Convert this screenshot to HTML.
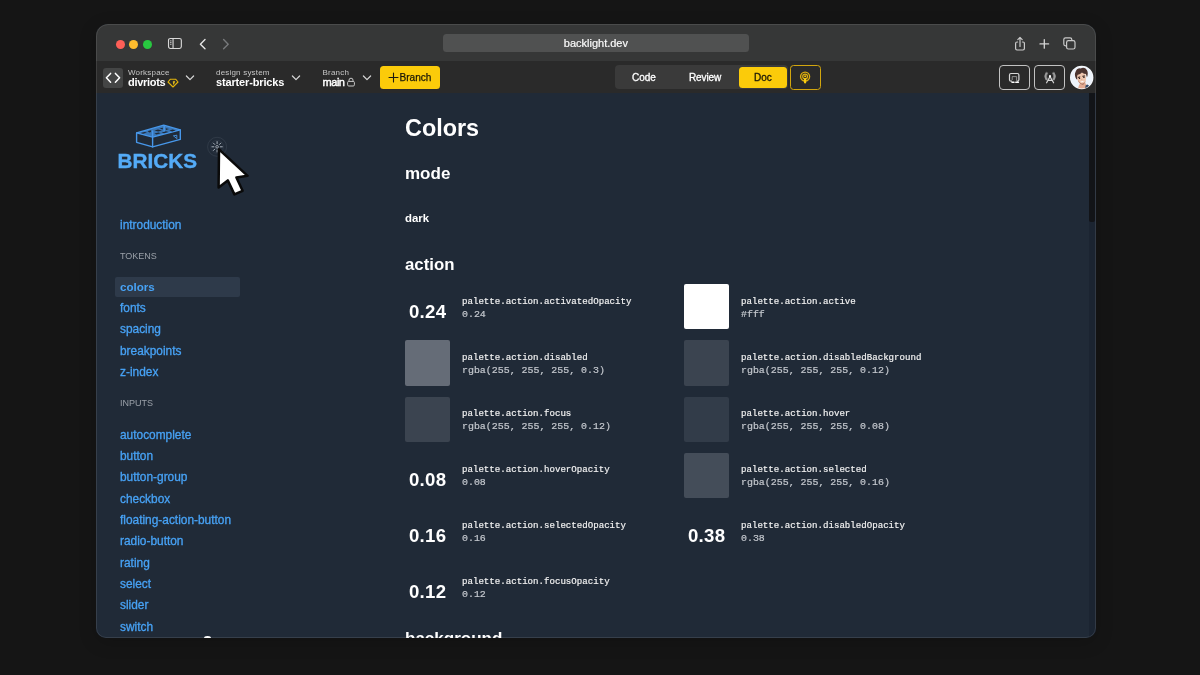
<!DOCTYPE html>
<html lang="en">
<head>
<meta charset="utf-8">
<title>backlight.dev – Colors</title>
<style>
*{box-sizing:border-box;margin:0;padding:0}
html,body{width:1200px;height:675px;overflow:hidden;background:#151515;font-family:"Liberation Sans",Arial,sans-serif;color:#fff}
.abs{position:absolute}
#win{will-change:transform;position:absolute;left:96px;top:24px;width:1000px;height:613.6px;border-radius:12px 12px 10px 10px;overflow:hidden;background:#202a37;box-shadow:0 4px 18px rgba(0,0,0,.18)}
#rim{position:absolute;left:0;top:0;width:100%;height:100%;border-radius:12px 12px 10px 10px;border:1px solid rgba(255,255,255,.1);pointer-events:none}
#titlebar{position:absolute;left:0;top:0;width:100%;height:37px;background:#363737;border-left:1px solid #363737}
#toolbar{position:absolute;left:0;top:37px;width:100%;height:31.6px;background:#2a2a2a;border-left:1px solid #2a2a2a}
#content{position:absolute;left:0;top:68.6px;width:100%;height:545px;background:#202a37;border-left:1px solid #202a37}
.dot{position:absolute;top:15.9px;width:9px;height:9px;border-radius:50%}
#url{position:absolute;left:345.6px;top:9.8px;width:306.6px;height:18px;border-radius:3.5px;background:#505151;text-align:center;font-size:11px;line-height:18px;color:#fbfbfb;-webkit-text-stroke:.2px #fbfbfb}
.tsm{position:absolute;font-size:8px;color:#c6c6c6;line-height:10px;white-space:nowrap;letter-spacing:.2px}
.tbd{position:absolute;font-size:10.5px;font-weight:bold;color:#fff;line-height:12px;white-space:nowrap}
.nav{position:absolute;left:23px;font-size:11.9px;line-height:14px;color:#47a2f5;white-space:nowrap;-webkit-text-stroke:.3px #47a2f5}
.sec{position:absolute;left:23px;font-size:9px;line-height:12px;color:#9aa0a8;white-space:nowrap}
.h{position:absolute;left:308px;font-weight:bold;color:#fff;white-space:nowrap}
.sw{position:absolute;width:45.3px;height:45.1px;border-radius:2px}
.num{position:absolute;width:45px;height:45px;text-align:center;font-weight:bold;font-size:18.6px;line-height:45px;color:#fff;letter-spacing:.3px;padding-left:.3px}
.l1{position:absolute;font-family:"Liberation Mono",monospace;font-size:9.12px;line-height:11px;color:#f2f2f2;white-space:nowrap;-webkit-text-stroke:.18px #f2f2f2}
.l2{position:absolute;font-family:"Liberation Mono",monospace;font-size:9.93px;line-height:11px;color:#c4c8ce;white-space:nowrap;-webkit-text-stroke:.2px #c4c8ce}
</style>
</head>
<body>
<div id="win">
  <div id="titlebar">
    <div class="dot" style="left:18.9px;background:#fe5f57"></div>
    <div class="dot" style="left:32.4px;background:#febc2e"></div>
    <div class="dot" style="left:45.9px;background:#28c840"></div>
    <svg class="abs" style="left:70.4px;top:12px" width="17" height="15.1" viewBox="0 0 18 16" fill="none" stroke="#d8d8d8" stroke-width="1.2">
      <rect x="1.6" y="2.6" width="13.6" height="10.6" rx="2"/><line x1="6.4" y1="2.6" x2="6.4" y2="13.2"/>
      <line x1="3.2" y1="5.2" x2="4.8" y2="5.2" stroke-width=".9"/><line x1="3.2" y1="7" x2="4.8" y2="7" stroke-width=".9"/><line x1="3.2" y1="8.8" x2="4.8" y2="8.8" stroke-width=".9"/>
    </svg>
    <svg class="abs" style="left:99.6px;top:12.7px" width="12" height="14" viewBox="0 0 12 14" fill="none" stroke="#e4e4e4" stroke-width="1.4" stroke-linecap="round" stroke-linejoin="round"><path d="M8 2.6 L3.4 7.2 L8 11.8"/></svg>
    <svg class="abs" style="left:123.4px;top:12.7px" width="12" height="14" viewBox="0 0 12 14" fill="none" stroke="#77797b" stroke-width="1.4" stroke-linecap="round" stroke-linejoin="round"><path d="M3.6 2.6 L8.2 7.2 L3.6 11.8"/></svg>
    <div id="url">backlight.dev</div>
    <svg class="abs" style="left:915px;top:9.7px" width="16" height="20" viewBox="0 0 16 20" fill="none" stroke="#c9c9c9" stroke-width="1.2" stroke-linecap="round" stroke-linejoin="round">
      <path d="M5.6 8 H5 Q3.6 8 3.6 9.4 V14.6 Q3.6 16 5 16 H11 Q12.4 16 12.4 14.6 V9.4 Q12.4 8 11 8 H10.4"/><path d="M8 12.4 V3.6 M5.8 5.6 L8 3.4 L10.2 5.6"/>
    </svg>
    <svg class="abs" style="left:940px;top:12.7px" width="14" height="14" viewBox="0 0 14 14" fill="none" stroke="#d4d4d4" stroke-width="1.3" stroke-linecap="round"><path d="M7.3 2.6 V11.2 M3 6.9 H11.6"/></svg>
    <svg class="abs" style="left:964px;top:11.3px" width="16" height="16" viewBox="0 0 16 16" fill="none" stroke="#c9c9c9" stroke-width="1.2">
      <path d="M5.4 10.8 H4.6 Q2.8 10.8 2.8 9 V4.6 Q2.8 2.8 4.6 2.8 H9 Q10.8 2.8 10.8 4.6 V5.2"/><rect x="5.6" y="5.6" width="8.4" height="8.4" rx="1.8"/>
    </svg>
  </div>
  <div id="toolbar">
    <div class="abs" style="left:6px;top:7px;width:20px;height:20px;border-radius:3px;background:#444545"></div>
    <svg class="abs" style="left:6px;top:7px" width="20" height="20" viewBox="0 0 20 20" fill="none" stroke="#fff" stroke-width="1.5" stroke-linecap="round" stroke-linejoin="round"><path d="M7.6 5.4 L3.4 9.8 L7.6 14.2"/><path d="M12.4 5.4 L16.6 9.8 L12.4 14.2"/></svg>
    <div class="tsm" style="left:31px;top:6.8px">Workspace</div>
    <div class="tbd" style="left:31px;top:15.3px;font-size:11px;letter-spacing:-.3px">divriots</div>
    <svg class="abs" style="left:70px;top:17px" width="12" height="10" viewBox="0 0 12 10" fill="none" stroke="#e3b50c" stroke-width="1.1" stroke-linejoin="round"><path d="M3.4 1.2 H8.6 L11 4 L6 9 L1 4 Z"/><path d="M6.2 3.4 H7.8 L6.6 6.4 Z" fill="#ffd21a" stroke="#ffd21a" stroke-width=".5"/></svg>
    <svg class="abs" style="left:87.8px;top:13.2px" width="10" height="8" viewBox="0 0 10 8" fill="none" stroke="#d6d6d6" stroke-width="1.2" stroke-linecap="round" stroke-linejoin="round"><path d="M1.4 2 L5 5.6 L8.6 2"/></svg>
    <div class="tsm" style="left:119px;top:6.8px">design system</div>
    <div class="tbd" style="left:119px;top:15.3px;font-size:11px;letter-spacing:-.15px">starter-bricks</div>
    <svg class="abs" style="left:193.6px;top:13.2px" width="10" height="8" viewBox="0 0 10 8" fill="none" stroke="#d6d6d6" stroke-width="1.2" stroke-linecap="round" stroke-linejoin="round"><path d="M1.4 2 L5 5.6 L8.6 2"/></svg>
    <div class="tsm" style="left:225.5px;top:6.8px">Branch</div>
    <div class="tbd" style="left:225.5px;top:15.3px;font-size:11px;font-weight:normal;letter-spacing:-.45px;-webkit-text-stroke:.45px #fff">main</div>
    <svg class="abs" style="left:249.4px;top:16.4px" width="10" height="10" viewBox="0 0 10 10" fill="none" stroke="#c9c9c9" stroke-width="1"><rect x="1.6" y="4.4" width="6.8" height="4.6" rx="1.2"/><path d="M3 4.4 V3.2 Q3 1.2 5 1.2 Q7 1.2 7 3.2 V4.4"/></svg>
    <svg class="abs" style="left:265px;top:13.2px" width="10" height="8" viewBox="0 0 10 8" fill="none" stroke="#d6d6d6" stroke-width="1.2" stroke-linecap="round" stroke-linejoin="round"><path d="M1.4 2 L5 5.6 L8.6 2"/></svg>
    <div class="abs" style="left:283px;top:5px;width:60.4px;height:23px;border-radius:3.5px;background:#fbcb0a"></div>
    <svg class="abs" style="left:291px;top:11px" width="11" height="11" viewBox="0 0 11 11" fill="none" stroke="#1c1a10" stroke-width="1.1" stroke-linecap="round"><path d="M5.5 1 V10 M1 5.5 H10"/></svg>
    <div class="abs" style="left:302.5px;top:10.5px;font-size:10.1px;line-height:12px;color:#1a1808;-webkit-text-stroke:.25px #1a1808">Branch</div>
    <div class="abs" style="left:518.4px;top:4px;width:173px;height:24px;border-radius:4px;background:#3a3a3a"></div>
    <div class="abs" style="left:535px;top:11px;font-size:10px;line-height:12px;color:#fff;-webkit-text-stroke:.3px #fff">Code</div>
    <div class="abs" style="left:592px;top:11px;font-size:10px;line-height:12px;color:#fff;-webkit-text-stroke:.3px #fff;letter-spacing:-.1px">Review</div>
    <div class="abs" style="left:641.6px;top:5.6px;width:48.4px;height:21px;border-radius:3.5px;background:#fbcb0a"></div>
    <div class="abs" style="left:657px;top:11px;font-size:10px;line-height:12px;color:#1a1808;-webkit-text-stroke:.3px #1a1808">Doc</div>
    <div class="abs" style="left:693px;top:4.2px;width:31px;height:24.8px;border-radius:3.5px;border:1.5px solid #d2a60e"></div>
    <svg class="abs" style="left:701px;top:9px" width="14" height="16" viewBox="0 0 14 16" fill="none" stroke="#dcae0e" stroke-width="1.4"><circle cx="7.1" cy="6.6" r="4.5"/><circle cx="7.1" cy="6.6" r="2.4" stroke-width="1.2"/><circle cx="7.1" cy="6.3" r="1" fill="#f4c20d" stroke="none"/><rect x="6" y="8" width="2.2" height="5.4" rx=".8" fill="#f9cd10" stroke="none"/></svg>
    <div class="abs" style="left:902px;top:4.4px;width:30.5px;height:24.2px;border-radius:4px;border:1.35px solid #c2c2c2"></div>
    <svg class="abs" style="left:907px;top:8px" width="20" height="18" viewBox="1004 69 20 18" fill="none" stroke="#d8d8d8" stroke-width="1.2" stroke-linecap="round" stroke-linejoin="round"><path d="M1011.6 81.2 H1011 Q1009.5 81.2 1009.5 79.7 V75 Q1009.5 73.5 1011 73.5 H1017.4 Q1018.9 73.5 1018.9 75 V79.7 Q1018.9 81.2 1017.4 81.2"/><path d="M1012.2 79.6 V76.6 H1016.6 V80.4" stroke-width=".8" stroke="#a8a8a8"/><path d="M1012 82.2 H1014 M1015.8 82.2 H1018.4" stroke="#fff" stroke-width="1.5"/></svg>
    <div class="abs" style="left:937.4px;top:4.4px;width:30.5px;height:24.2px;border-radius:4px;border:1.35px solid #c2c2c2"></div>
    <svg class="abs" style="left:943px;top:8px" width="20" height="18" viewBox="1040 69 20 18" fill="none" stroke="#d4d4d4" stroke-width="1.2" stroke-linecap="round" stroke-linejoin="round"><path d="M1050 76.6 L1046.6 82.8 M1050 76.6 L1053.6 82.8 M1047.8 80.4 H1052.4"/><circle cx="1050" cy="76.2" r="1.1" fill="#fff" stroke="none"/><path d="M1047.6 73.2 Q1045.4 76.2 1047.6 79.4 L1046 80.2 Q1043.2 76.2 1046 72.4 Z M1052.6 73.2 Q1054.8 76.2 1052.6 79.4 L1054.2 80.2 Q1057 76.2 1054.2 72.4 Z" fill="#9c9c9c" stroke="#9c9c9c" stroke-width=".5"/></svg>
    <svg class="abs" style="left:972px;top:4px" width="25" height="25" viewBox="0 0 25 25">
      <defs><clipPath id="avc"><circle cx="12.7" cy="12.5" r="11.1"/></clipPath></defs>
      <circle cx="12.7" cy="12.5" r="11.7" fill="#fbfcfe"/>
      <g clip-path="url(#avc)">
        <circle cx="12.7" cy="12.5" r="11.2" fill="#edf3fb"/>
        <path d="M8.6 25 L10.2 19.4 L15.8 17.6 L18.6 21 L19.4 25 Z" fill="#e3ab93"/>
        <path d="M16.6 20.6 L18.4 19.4 Q21.6 20.6 22.6 25 L16 25 Z" fill="#2d4868"/>
        <g transform="rotate(-9 12.2 13)">
          <path d="M8.2 9.6 Q7.8 14.4 9.6 17.6 Q11.4 20.4 13.2 20 Q16 19.2 16.8 14.6 L17.2 9 Q12.6 6 8.2 9.6Z" fill="#efc6ae"/>
          <path d="M8.4 13.6 Q8.8 17 10.2 18.6 Q11.8 20.6 13.4 20 Q15 19.4 16 17 Q14.6 18.6 12.6 18.6 Q10 18.2 8.4 13.6Z" fill="#b47c66"/>
          <path d="M10.6 16.6 Q12.4 18.2 14.4 16.6 Q13.6 16.2 12.6 16.4 Q11.4 16.2 10.6 16.6Z" fill="#fff"/>
          <path d="M11.6 14.2 Q12.4 15.4 13.4 14.2 Z" fill="#c99078"/>
          <path d="M7.2 13.4 Q5.4 8.4 7.8 5.6 Q9.6 2.6 13 3.4 Q17.6 2.4 19 6 Q20.4 9 18 13.4 L17.4 9.6 Q15.4 9.6 13.8 7.8 Q11.8 9.4 9.4 9.2 Q8.2 9.8 8.2 13.6 Z" fill="#4c342f"/>
          <path d="M9 12 L11.4 11.7 M13.6 11.5 L16.2 11.5" stroke="#2a1a18" stroke-width=".9"/>
          <circle cx="10.5" cy="13" r=".75" fill="#231614"/><circle cx="15" cy="12.8" r=".75" fill="#231614"/>
        </g>
      </g>
    </svg>
  </div>
  <div id="content">
    <svg class="abs" style="left:33px;top:25.7px" width="60" height="35" viewBox="130 118 60 35" fill="none" stroke="#4797ea" stroke-width="1.4" stroke-linejoin="round" stroke-linecap="round">
      <path d="M136.6 132.9 L163.7 125.2 L180.3 129.9 L152.6 137.1 Z" fill="#4390e2" fill-opacity=".75"/>
      <path d="M136.6 132.9 V142.3 L152.6 146.9 L180.3 139.4 V129.9"/>
      <path d="M152.6 131 V146.9 M164.2 126 V132"/>
      <g fill="#202a37" stroke="none">
        <path d="M140.6 133 L144.6 131.9 L147 132.6 L143 133.8 Z"/>
        <path d="M147.6 131.2 L151 130.2 L151 132 L149.4 132.6 Z"/>
        <path d="M154.4 133.6 L158.6 132.5 L160.6 133.2 L156.4 134.4 Z"/>
        <path d="M154.4 130.4 L158 129.4 L162 130.4 L158.2 131.6 Z"/>
        <path d="M159.6 128.6 L162.8 127.8 L162.8 129.6 Z"/>
        <path d="M165.8 128.2 L169 129 L166 130 Z"/>
        <path d="M161.6 132.4 L166 131.2 L168.6 131.9 L164 133.2 Z"/>
        <path d="M169.4 130.4 L172.6 129.6 L175.6 130.4 L172.2 131.4 Z"/>
      </g>
      <path d="M173.4 135.9 L176.8 135.2 V138.6 M174.4 136.6 L176 138" stroke-width=".9"/>
    </svg>
    <div class="abs" style="left:20.6px;top:57.6px;font-size:20.7px;line-height:22px;font-weight:bold;color:#54abf7;letter-spacing:.05px;-webkit-text-stroke:.4px #54abf7">BRICKS</div>
    <svg class="abs" style="left:103px;top:37.4px" width="60" height="70" viewBox="200 130 60 70">
      <circle cx="217.1" cy="146.8" r="9.5" fill="none" stroke="#3a4553" stroke-width=".6"/>
      <circle cx="217.1" cy="146.8" r="6.5" fill="none" stroke="#36414f" stroke-width=".5"/>
      <g stroke="#aab2bc" stroke-width="1" stroke-linecap="round"><path d="M217.1 141.6 V143.6 M217.1 150 V152 M211.9 146.8 H213.9 M220.3 146.8 H222.3 M213.4 143.1 L214.8 144.5 M220.8 143.1 L219.4 144.5 M213.4 150.5 L214.8 149.1"/></g>
      <circle cx="217.1" cy="146.8" r="1.3" fill="none" stroke="#c8ced6" stroke-width=".7"/>
      <path d="M219 149.4 L218.6 187.4 L227.8 180.4 L234.4 194.4 L242.6 190.8 L236.4 177.4 L247.6 175.8 Z" fill="#fff" stroke="#0a0a0a" stroke-width="2.5" stroke-linejoin="round"/>
    </svg>
    <div class="abs" style="left:17.8px;top:184.4px;width:125.4px;height:20px;border-radius:2px;background:#2e3a4a"></div>
    <div class="nav" style="top:125.9px">introduction</div>
    <div class="nav" style="top:187.2px;font-weight:bold;font-size:11.6px;-webkit-text-stroke:0">colors</div>
    <div class="nav" style="top:208.4px">fonts</div>
    <div class="nav" style="top:229.9px">spacing</div>
    <div class="nav" style="top:251.4px">breakpoints</div>
    <div class="nav" style="top:272.6px">z-index</div>
    <div class="nav" style="top:335.2px">autocomplete</div>
    <div class="nav" style="top:356.4px">button</div>
    <div class="nav" style="top:377.7px">button-group</div>
    <div class="nav" style="top:399.1px">checkbox</div>
    <div class="nav" style="top:420.4px">floating-action-button</div>
    <div class="nav" style="top:441.7px">radio-button</div>
    <div class="nav" style="top:463.1px">rating</div>
    <div class="nav" style="top:484.4px">select</div>
    <div class="nav" style="top:505.7px">slider</div>
    <div class="nav" style="top:527.1px">switch</div>
    <div class="sec" style="top:157.4px">TOKENS</div>
    <div class="sec" style="top:304.4px">INPUTS</div>
    <div class="h" style="top:21.4px;font-size:23.4px;line-height:28px">Colors</div>
    <div class="h" style="top:71.4px;font-size:17px;line-height:20px">mode</div>
    <div class="h" style="top:118.9px;font-size:11.4px;line-height:14px">dark</div>
    <div class="h" style="top:162.2px;font-size:16.8px;line-height:20px">action</div>
    <div class="h" style="top:536.4px;font-size:17px;line-height:20px">background</div>
    <div class="num" style="left:308px;top:196.4px">0.24</div>
    <div class="l1" style="left:365px;top:203.3px">palette.action.activatedOpacity</div>
    <div class="l2" style="left:365px;top:216.3px">0.24</div>
    <div class="sw" style="left:308px;top:247.9px;background:#656c77"></div>
    <div class="l1" style="left:365px;top:259.4px">palette.action.disabled</div>
    <div class="l2" style="left:365px;top:272.4px">rgba(255, 255, 255, 0.3)</div>
    <div class="sw" style="left:308px;top:304.0px;background:#3b4450"></div>
    <div class="l1" style="left:365px;top:315.5px">palette.action.focus</div>
    <div class="l2" style="left:365px;top:328.5px">rgba(255, 255, 255, 0.12)</div>
    <div class="num" style="left:308px;top:364.8px">0.08</div>
    <div class="l1" style="left:365px;top:371.7px">palette.action.hoverOpacity</div>
    <div class="l2" style="left:365px;top:384.7px">0.08</div>
    <div class="num" style="left:308px;top:420.5px">0.16</div>
    <div class="l1" style="left:365px;top:427.4px">palette.action.selectedOpacity</div>
    <div class="l2" style="left:365px;top:440.4px">0.16</div>
    <div class="num" style="left:308px;top:476.5px">0.12</div>
    <div class="l1" style="left:365px;top:483.4px">palette.action.focusOpacity</div>
    <div class="l2" style="left:365px;top:496.4px">0.12</div>
    <div class="sw" style="left:587px;top:191.8px;background:#ffffff"></div>
    <div class="l1" style="left:644px;top:203.3px">palette.action.active</div>
    <div class="l2" style="left:644px;top:216.3px">#fff</div>
    <div class="sw" style="left:587px;top:247.9px;background:#3b4450"></div>
    <div class="l1" style="left:644px;top:259.4px">palette.action.disabledBackground</div>
    <div class="l2" style="left:644px;top:272.4px">rgba(255, 255, 255, 0.12)</div>
    <div class="sw" style="left:587px;top:304.0px;background:#323c49"></div>
    <div class="l1" style="left:644px;top:315.5px">palette.action.hover</div>
    <div class="l2" style="left:644px;top:328.5px">rgba(255, 255, 255, 0.08)</div>
    <div class="sw" style="left:587px;top:360.2px;background:#444d59"></div>
    <div class="l1" style="left:644px;top:371.7px">palette.action.selected</div>
    <div class="l2" style="left:644px;top:384.7px">rgba(255, 255, 255, 0.16)</div>
    <div class="num" style="left:587px;top:420.5px">0.38</div>
    <div class="l1" style="left:644px;top:427.4px">palette.action.disabledOpacity</div>
    <div class="l2" style="left:644px;top:440.4px">0.38</div>
    <div class="abs" style="left:992.2px;top:0;width:7px;height:545px;background:#1b2431"></div>
    <div class="abs" style="left:992.4px;top:0;width:5.4px;height:129.6px;background:#121418;border-radius:0 0 2px 2px"></div>
    <div class="abs" style="left:106.6px;top:543.2px;width:7.6px;height:5px;border-radius:50%;background:#fff"></div>
  </div>
  <div id="rim"></div>
</div>
</body>
</html>
